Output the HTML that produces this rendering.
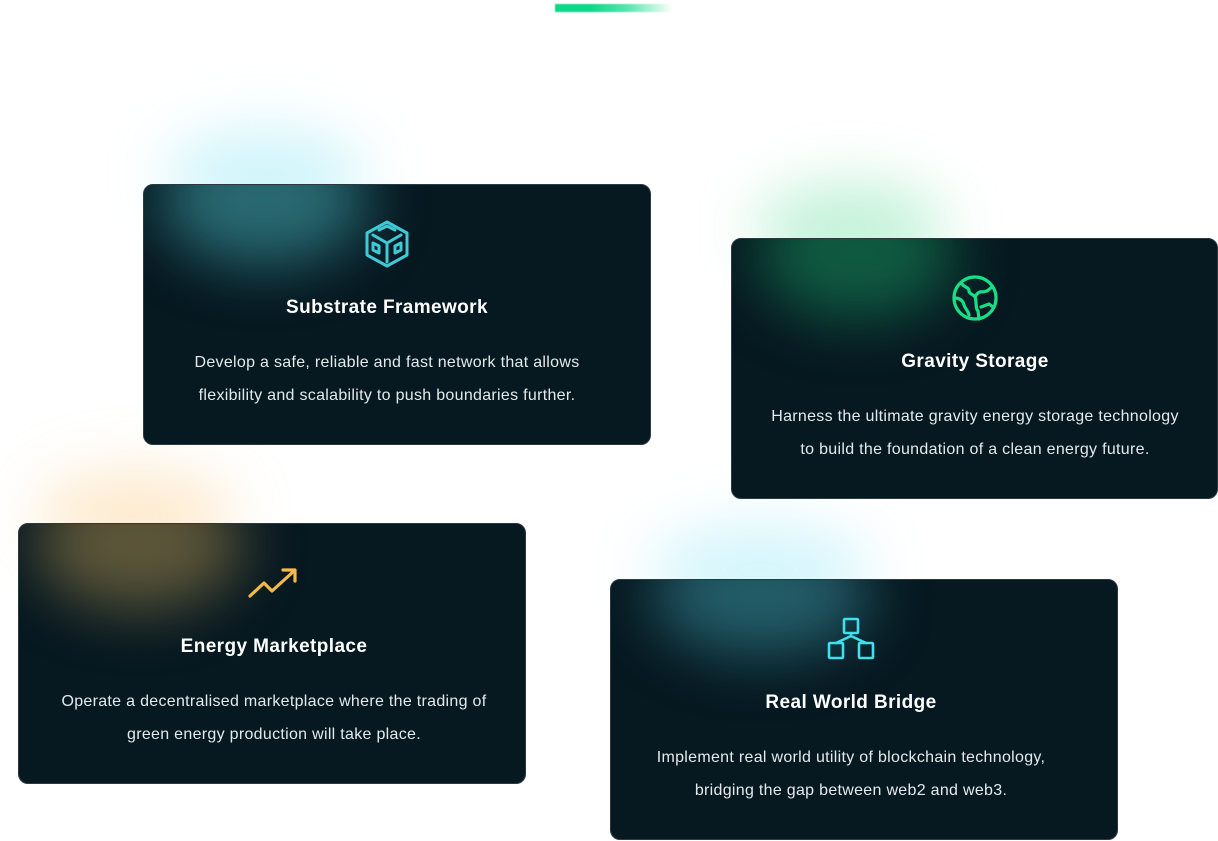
<!DOCTYPE html>
<html><head><style>
*{margin:0;padding:0;box-sizing:border-box}
body{width:1218px;height:841px;background:#fff;position:relative;overflow:hidden;font-family:"Liberation Sans",sans-serif}
.bar{position:absolute;left:555px;top:4px;width:118px;height:8px;background:linear-gradient(90deg,#0bd987 0%,#0bd987 30%,rgba(11,217,135,.7) 60%,rgba(11,217,135,0) 100%);filter:blur(.6px)}
.glow{position:absolute;border-radius:50%;filter:blur(30px)}
.card{position:absolute;width:508px;height:261px;border-radius:10px;border:1px solid #2a3a40;background:#061820;overflow:hidden;text-align:center;color:#fff}
.card .in{position:absolute;border-radius:50%;filter:blur(30px)}
.card .c{position:absolute;top:0;bottom:0;width:600px}
.card svg{position:absolute;left:50%;transform:translateX(-50%);top:35px}
.card h3{position:absolute;left:0;right:0;top:112px;font-size:19px;font-weight:bold;letter-spacing:.4px}
.card p{position:absolute;left:0;right:0;top:161px;font-size:16px;line-height:33px;color:#e4eaec;letter-spacing:.3px}
</style></head><body>
<div class="bar"></div>
<div class="glow" style="left:165px;top:130px;width:200px;height:90px;background:rgba(90,220,240,.3)"></div>
<div class="glow" style="left:755px;top:185px;width:190px;height:85px;background:rgba(40,210,120,.3)"></div>
<div class="glow" style="left:35px;top:470px;width:200px;height:90px;background:rgba(250,185,90,.3)"></div>
<div class="glow" style="left:650px;top:525px;width:220px;height:90px;background:rgba(90,220,240,.28)"></div>

<div class="card" style="left:143px;top:184px">
<div class="in" style="left:15px;top:-50px;width:210px;height:130px;background:rgba(60,150,160,.65)"></div>
<div class="c" style="left:-57px">
<svg width="48" height="48" viewBox="0 0 48 48" fill="none" stroke="#40c9d6" stroke-width="3" stroke-linejoin="round" stroke-linecap="round"><path d="M24 2 L44 13 V35 L24 46 L4 35 V13 Z"/><path d="M16 10 L24 6 L32 10 M10 15 L24 23 L38 15 M24 23 V42"/><path d="M10 23 L16 26 V33 L10 30 Z M38 23 L32 26 V33 L38 30 Z"/></svg>
<h3>Substrate Framework</h3>
<p>Develop a safe, reliable and fast network that allows<br>flexibility and scalability to push boundaries further.</p></div></div>

<div class="card" style="left:731px;top:238px;width:487px">
<div class="in" style="left:25px;top:-50px;width:200px;height:130px;background:rgba(20,120,80,.7)"></div>
<div class="c" style="left:-57px">
<svg width="48" height="48" viewBox="0 0 48 48" fill="none" stroke="#19de88" stroke-width="3.2" stroke-linejoin="round" stroke-linecap="round"><circle cx="24" cy="24" r="21"/><path d="M11 10 C14 14 18 13 18 17 C18 20 22 20 24 23 C26 19 29 17 32 18 L36 17 L41 13"/><path d="M4 24 C9 24 12 27 13 31 C14 35 17 36 18 41"/><path d="M24 23 C26 28 24 34 27 37 L28 45 M30 33 L38 30 L42 33"/></svg>
<h3>Gravity Storage</h3>
<p>Harness the ultimate gravity energy storage technology<br>to build the foundation of a clean energy future.</p></div></div>

<div class="card" style="left:18px;top:523px">
<div class="in" style="left:15px;top:-45px;width:210px;height:130px;background:rgba(140,120,70,.65)"></div>
<div class="c" style="left:-45px">
<svg width="54" height="40" viewBox="0 0 54 40" fill="none" stroke="#f5b84a" stroke-width="3.2" stroke-linejoin="round" stroke-linecap="round" style="top:40px"><path d="M3 32 L17 19 L25 27 L47 7 M36 6 H48 V17"/></svg>
<h3>Energy Marketplace</h3>
<p>Operate a decentralised marketplace where the trading of<br>green energy production will take place.</p></div></div>

<div class="card" style="left:610px;top:579px">
<div class="in" style="left:40px;top:-45px;width:220px;height:120px;background:rgba(50,130,145,.65)"></div>
<div class="c" style="left:-60px">
<svg width="48" height="44" viewBox="0 0 48 44" fill="none" stroke="#3fe0ee" stroke-width="2.6" stroke-linejoin="round" stroke-linecap="round" style="top:37px"><rect x="17" y="2" width="14" height="14" rx="1"/><rect x="2" y="26" width="14" height="15" rx="1"/><rect x="32" y="26" width="14" height="15" rx="1"/><path d="M24 16 V19 L9 26 M24 19 L39 26"/></svg>
<h3>Real World Bridge</h3>
<p>Implement real world utility of blockchain technology,<br>bridging the gap between web2 and web3.</p></div></div>
</body></html>
